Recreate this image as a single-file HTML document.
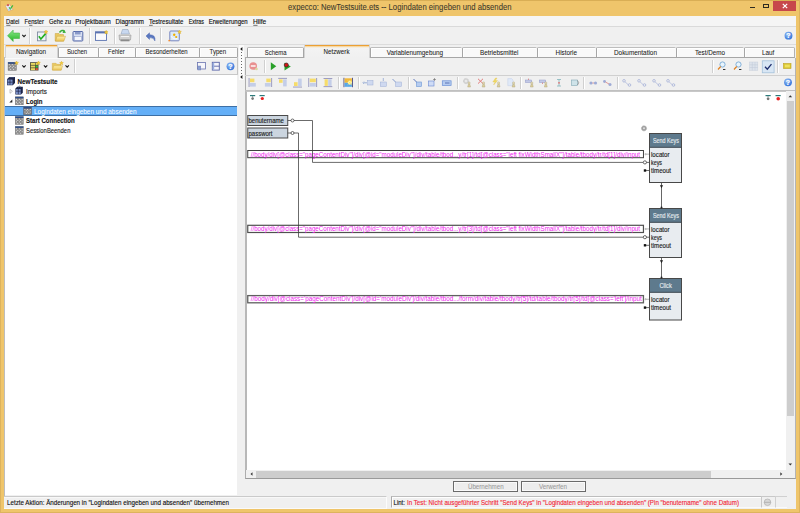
<!DOCTYPE html>
<html><head><meta charset="utf-8">
<style>
*{box-sizing:border-box;margin:0;padding:0}
html,body{width:800px;height:513px;overflow:hidden}
body{position:relative;background:#EFC56B;font-family:"Liberation Sans",sans-serif;font-size:6.3px;color:#1a1a1a}
.a{position:absolute}
.t{position:absolute;white-space:pre;line-height:1;-webkit-text-stroke:0.12px currentColor}
.tab{position:absolute;top:46.6px;height:11px;border:1px solid #A6A6A6;border-top-color:#BDBDBD;border-right:none;border-radius:1.5px 1.5px 0 0;background:#F9F9F9;box-shadow:inset 1px 1px 0 #FFF}
.sep{position:absolute;width:2px;background:#D0D0D0;border-right:1px solid #FFF}
.ic{position:absolute}
</style></head>
<body>
<!-- title bar -->
<div class="a" style="left:0;top:0;width:800px;height:1px;background:#D9AE55"></div><div class="a" style="left:0;top:0;width:1px;height:513px;background:#DDB35E"></div><div class="a" style="left:799px;top:0;width:1px;height:513px;background:#DDB35E"></div><div class="a" style="left:0;top:512px;width:800px;height:1px;background:#DDB35E"></div>
<svg class="a" style="left:0;top:0" width="16" height="16" viewBox="0 0 16 16"><path d="M5.3 5.8 L9.6 4.2 L13 9.6 L8.4 11.3Z" fill="#E4ECF6" stroke="#D49A60" stroke-width="0.5"/><circle cx="8" cy="5.2" r="1.1" fill="#D05A5A"/><path d="M9 7.4 L10.4 8.9 L12.8 5.4" fill="none" stroke="#3EB83E" stroke-width="1.3"/><path d="M7.5 9.5 L11 8.6 L8.8 11Z" fill="#A8D0F4"/></svg>
<div class="a" style="left:750px;top:6.5px;width:4.5px;height:1.5px;background:#2E2A20"></div>
<div class="a" style="left:763px;top:3.5px;width:6px;height:4.5px;border:1px solid #2E2A20;border-top-width:1.6px"></div>
<div class="a" style="left:773px;top:1px;width:23px;height:10px;background:#C7474B"></div>
<svg class="a" style="left:782px;top:3px" width="6" height="6" viewBox="0 0 6 6"><path d="M0.8 0.8 L5.2 5.2 M5.2 0.8 L0.8 5.2" stroke="#FFF" stroke-width="1.2"/></svg>

<!-- client area -->
<div class="a" style="left:4px;top:16px;width:791.5px;height:492.5px;background:#F0F0F0"></div>

<!-- menu bar -->
<div class="a" style="left:4px;top:16px;width:791.5px;height:10px;background:#F5F5F5"></div>
<div class="a" style="left:4px;top:26px;width:791.5px;height:1px;background:#DADADA"></div>

<!-- main toolbar -->
<div class="sep" style="left:29px;top:28px;height:16px"></div>
<div class="sep" style="left:88.5px;top:28px;height:16px"></div>
<div class="sep" style="left:113.5px;top:28px;height:16px"></div>
<div class="sep" style="left:139px;top:28px;height:16px"></div>
<div class="sep" style="left:160px;top:28px;height:16px"></div>
<div class="a" style="left:4px;top:44px;width:791.5px;height:1px;background:#DCDCDC"></div>

<!-- LEFT PANEL -->
<div class="a" style="left:4px;top:57px;width:234px;height:1px;background:#ADADAD"></div>
<div class="tab" style="left:58px;width:39.5px"></div>
<div class="tab" style="left:97.5px;width:37.5px"></div>
<div class="tab" style="left:135px;width:64px"></div>
<div class="tab" style="left:199px;width:38.5px;border-right:1px solid #A6A6A6"></div>
<div class="a" style="left:4.5px;top:45.2px;width:53.5px;height:12.8px;background:linear-gradient(#ECA034 0,#ECA034 1.3px,#F7D49A 1.3px,#F6E6C8 2.4px,#F3F3F3 2.6px,#F0F0F0);border:1px solid #D4D4D4;border-bottom:none;border-top:none"></div>

<!-- left toolbar -->
<div class="sep" style="left:73.5px;top:59px;height:14px"></div>
<div class="a" style="left:4.5px;top:73.5px;width:233px;height:1px;background:#C8C8C8"></div><div class="a" style="left:237px;top:57px;width:1px;height:17px;background:#C4C4C4"></div><div class="a" style="left:5px;top:58px;width:232px;height:1px;background:#FAFAFA"></div>
<!-- tree -->
<div class="a" style="left:5px;top:74.5px;width:232.3px;height:420px;background:#FFF"></div>
<div class="a" style="left:5px;top:105.8px;width:232px;height:10px;background:#64AFF7;border-top:1px solid #3D6FA5;border-bottom:1px solid #3D6FA5"></div>


<div class="a" style="left:4px;top:57px;width:1px;height:438.5px;background:#BDBDBD"></div>
<!-- splitter -->
<div class="a" style="left:238.5px;top:45px;width:5px;height:35px;background:#FBFBFB"></div>
<div class="a" style="left:240.8px;top:52.2px;width:1px;height:1px;background:#666"></div><div class="a" style="left:240.8px;top:55.2px;width:1px;height:1px;background:#666"></div><div class="a" style="left:240.8px;top:58.2px;width:1px;height:1px;background:#666"></div><div class="a" style="left:240.8px;top:61.2px;width:1px;height:1px;background:#666"></div><div class="a" style="left:240.8px;top:64.2px;width:1px;height:1px;background:#666"></div><div class="a" style="left:240.8px;top:67.2px;width:1px;height:1px;background:#666"></div><div class="a" style="left:240.8px;top:70.2px;width:1px;height:1px;background:#666"></div><div class="a" style="left:240.8px;top:73.2px;width:1px;height:1px;background:#666"></div>
<svg class="a" style="left:239.5px;top:47px" width="3" height="4"><path d="M2.4 0 L0.2 2 L2.4 4Z" fill="#111"/></svg>
<svg class="a" style="left:239.5px;top:74.6px" width="3" height="4"><path d="M2.4 0 L0.2 2 L2.4 4Z" fill="#111"/></svg>
<!-- RIGHT PANEL -->
<div class="a" style="left:245px;top:57px;width:550px;height:1px;background:#ADADAD"></div>
<div class="tab" style="left:246.5px;width:57.5px;border-right:1px solid #A6A6A6"></div>
<div class="tab" style="left:369.5px;width:92.5px"></div>
<div class="tab" style="left:462px;width:75px"></div>
<div class="tab" style="left:537px;width:58.5px"></div>
<div class="tab" style="left:595.5px;width:80.5px"></div>
<div class="tab" style="left:676px;width:68px"></div>
<div class="tab" style="left:744px;width:50.5px;border-right:1px solid #B0B0B0"></div>
<div class="a" style="left:304px;top:45.2px;width:65.5px;height:12.8px;background:linear-gradient(#ECA034 0,#ECA034 1.3px,#F7D49A 1.3px,#F6E6C8 2.4px,#F3F3F3 2.6px,#F0F0F0);border:1px solid #D4D4D4;border-bottom:none;border-top:none"></div>

<div class="a" style="left:244.5px;top:57.5px;width:551px;height:421.5px;border-left:1px solid #ADADAD;border-bottom:1px solid #9A9A9A;border-right:1px solid #B4B4B4"></div>
<!-- toolbar1/2 -->
<div class="sep" style="left:263.5px;top:60px;height:13px"></div>
<div class="sep" style="left:712px;top:60px;height:13px"></div>
<div class="sep" style="left:777px;top:60px;height:13px"></div>
<div class="a" style="left:245px;top:74.5px;width:550px;height:1px;background:#D0D0D0"></div>
<div class="sep" style="left:338px;top:77px;height:12px"></div>
<div class="sep" style="left:358px;top:77px;height:12px"></div><div class="sep" style="left:408px;top:77px;height:12px"></div><div class="sep" style="left:457px;top:77px;height:12px"></div><div class="sep" style="left:520px;top:77px;height:12px"></div><div class="sep" style="left:583px;top:77px;height:12px"></div><div class="sep" style="left:617px;top:77px;height:12px"></div>
<div class="a" style="left:245px;top:90px;width:550px;height:1px;background:#C0C0C0"></div>

<!-- canvas -->
<div class="a" style="left:245px;top:91px;width:541px;height:379px;background:#FFF;border-left:2px solid #B8B8B8;border-top:1px solid #C8C8C8"></div>
<!-- vscroll -->
<div class="a" style="left:786px;top:91px;width:8px;height:379px;background:#F0F0F0"></div>
<div class="a" style="left:787px;top:101px;width:7px;height:315px;background:#CDCDCD"></div>
<!-- hscroll -->
<div class="a" style="left:246px;top:470px;width:540px;height:8px;background:#F0F0F0"></div>
<div class="a" style="left:255.5px;top:470.5px;width:455px;height:7px;background:#CDCDCD"></div>

<svg class="a" style="left:0;top:0" width="800" height="513" viewBox="0 0 800 513" font-family="Liberation Sans, sans-serif">
<rect x="247.75" y="115.5" width="40" height="10" fill="#CBD5DF" stroke="#4A4A4A" stroke-width="1"/>
<text x="248.5" y="123" font-size="6.8" fill="#1E1E1E" stroke="#1E1E1E" stroke-width="0.15" textLength="35.4" lengthAdjust="spacingAndGlyphs">benutername</text>
<rect x="247.75" y="128" width="40" height="10" fill="#CBD5DF" stroke="#4A4A4A" stroke-width="1"/>
<text x="248.5" y="135.7" font-size="6.8" fill="#1E1E1E" stroke="#1E1E1E" stroke-width="0.15" textLength="24" lengthAdjust="spacingAndGlyphs">passwort</text>
<rect x="247.75" y="150.5" width="395.7" height="7.2" fill="#FFF" stroke="#404040" stroke-width="1"/>
<text x="250.7" y="156.6" font-size="6.2" transform="translate(0 156.6) scale(1 1.15) translate(0 -156.6)" fill="#EE22EE" textLength="389.3" lengthAdjust="spacingAndGlyphs">//body/div[@class=&quot;pageContentDiv&quot;]/div[@id=&quot;moduleDiv&quot;]/div/table/tbod...y/tr[1]/td[@class=&quot;left fixWidthSmallX&quot;]/table/tbody/tr/td[1]/div/input</text>
<path d="M644.5 154.15 H649.5" stroke="#B8B8B8" stroke-width="1"/><path d="M645 152.9 L647.3 154.15 L645 155.4Z" fill="#BBB"/>
<rect x="247.75" y="225.3" width="395.7" height="7.2" fill="#FFF" stroke="#505050" stroke-width="1.2"/>
<text x="250.7" y="231.4" font-size="6.2" transform="translate(0 231.4) scale(1 1.15) translate(0 -231.4)" fill="#EE22EE" textLength="389.3" lengthAdjust="spacingAndGlyphs">//body/div[@class=&quot;pageContentDiv&quot;]/div[@id=&quot;moduleDiv&quot;]/div/table/tbod...y/tr[3]/td[@class=&quot;left fixWidthSmallX&quot;]/table/tbody/tr/td[1]/div/input</text>
<path d="M644.5 228.95000000000002 H649.5" stroke="#B8B8B8" stroke-width="1"/><path d="M645 227.70000000000002 L647.3 228.95000000000002 L645 230.20000000000002Z" fill="#BBB"/>
<rect x="247.75" y="295.6" width="395.7" height="7.2" fill="#FFF" stroke="#606060" stroke-width="1.3"/>
<text x="250.7" y="301.5" font-size="6.2" transform="translate(0 301.5) scale(1 1.15) translate(0 -301.5)" fill="#EE22EE" textLength="391" lengthAdjust="spacingAndGlyphs">//body/div[@class=&#x27;pageContentDiv&#x27;]/div[@id=&#x27;moduleDiv&#x27;]/div/table/tbod.../form/div/table/tbody/tr[5]/td/table/tbody/tr[5]/td[@class=&#x27;left&#x27;]/input</text>
<path d="M644.5 299.25 H649.5" stroke="#B8B8B8" stroke-width="1"/><path d="M645 298.0 L647.3 299.25 L645 300.5Z" fill="#BBB"/>
<g fill="none" stroke="#3A3A3A" stroke-width="0.75">
<path d="M287.75 120.5 H291 M294 120.5 H312.5 V162.4 H643.2"/>
<circle cx="292.5" cy="120.5" r="1.5" fill="#fff"/>
<path d="M287.75 133 H291 M294 133 H298.5 V237.2 H643.2"/>
<circle cx="292.5" cy="133" r="1.5" fill="#fff"/>
<circle cx="644.9" cy="162.4" r="1.6" fill="#fff"/><path d="M646.5 162.4 H649.5"/>
<circle cx="644.9" cy="237.2" r="1.6" fill="#fff"/><path d="M646.5 237.2 H649.5"/>
<rect x="643.8" y="169.3" width="2.4" height="2.4" fill="#111" stroke="none"/><path d="M646 170.5 H649.5"/>
<rect x="643.8" y="244.10000000000002" width="2.4" height="2.4" fill="#111" stroke="none"/><path d="M646 245.3 H649.5"/>
<rect x="643.8" y="306.40000000000003" width="2.4" height="2.4" fill="#111" stroke="none"/><path d="M646 307.6 H649.5"/>
</g>
<rect x="649.5" y="133.5" width="32" height="49" fill="#E8ECF0" stroke="#484848" stroke-width="1"/><rect x="650" y="134" width="31" height="13.3" fill="#5E7A8D"/><line x1="649.5" y1="147.3" x2="681.5" y2="147.3" stroke="#3C4650" stroke-width="1"/><text x="652.9" y="142.9" font-size="6.5" fill="#E4EAEE" stroke="#E4EAEE" stroke-width="0.15" textLength="26.1" lengthAdjust="spacingAndGlyphs">Send Keys</text><text x="651" y="156.79999999999998" font-size="6.8" fill="#1E1E1E" stroke="#1E1E1E" stroke-width="0.15" textLength="18.5" lengthAdjust="spacingAndGlyphs">locator</text><text x="651" y="164.6" font-size="6.8" fill="#1E1E1E" stroke="#1E1E1E" stroke-width="0.15" textLength="11" lengthAdjust="spacingAndGlyphs">keys</text><text x="651" y="172.9" font-size="6.8" fill="#1E1E1E" stroke="#1E1E1E" stroke-width="0.15" textLength="20" lengthAdjust="spacingAndGlyphs">timeout</text>
<rect x="649.5" y="208.5" width="32" height="49" fill="#E8ECF0" stroke="#484848" stroke-width="1"/><rect x="650" y="209" width="31" height="13.3" fill="#5E7A8D"/><line x1="649.5" y1="222.3" x2="681.5" y2="222.3" stroke="#3C4650" stroke-width="1"/><text x="652.9" y="217.9" font-size="6.5" fill="#E4EAEE" stroke="#E4EAEE" stroke-width="0.15" textLength="26.1" lengthAdjust="spacingAndGlyphs">Send Keys</text><text x="651" y="231.79999999999998" font-size="6.8" fill="#1E1E1E" stroke="#1E1E1E" stroke-width="0.15" textLength="18.5" lengthAdjust="spacingAndGlyphs">locator</text><text x="651" y="239.6" font-size="6.8" fill="#1E1E1E" stroke="#1E1E1E" stroke-width="0.15" textLength="11" lengthAdjust="spacingAndGlyphs">keys</text><text x="651" y="247.9" font-size="6.8" fill="#1E1E1E" stroke="#1E1E1E" stroke-width="0.15" textLength="20" lengthAdjust="spacingAndGlyphs">timeout</text>
<rect x="649.5" y="278.5" width="32" height="41.5" fill="#E8ECF0" stroke="#484848" stroke-width="1"/><rect x="650" y="279" width="31" height="13.3" fill="#5E7A8D"/><line x1="649.5" y1="292.3" x2="681.5" y2="292.3" stroke="#3C4650" stroke-width="1"/><text x="659.5" y="287.9" font-size="6.5" fill="#E4EAEE" stroke="#E4EAEE" stroke-width="0.15" textLength="12.3" lengthAdjust="spacingAndGlyphs">Click</text><text x="651" y="301.90000000000003" font-size="6.8" fill="#1E1E1E" stroke="#1E1E1E" stroke-width="0.15" textLength="18.5" lengthAdjust="spacingAndGlyphs">locator</text><text x="651" y="310.1" font-size="6.8" fill="#1E1E1E" stroke="#1E1E1E" stroke-width="0.15" textLength="20" lengthAdjust="spacingAndGlyphs">timeout</text>
<path d="M661.5 183 V208 M661.5 258 V278" stroke="#333" stroke-width="0.75"/>
<path d="M659.9 185.3 L663.1 185.3 L661.5 188.3Z M659.9 260.3 L663.1 260.3 L661.5 263.3Z" fill="#222"/>
<circle cx="661.5" cy="207.5" r="1" fill="#222"/><circle cx="661.5" cy="277.5" r="1" fill="#222"/>
<circle cx="644" cy="128.3" r="2.6" fill="#A0A0A0" stroke="#B8B8B8" stroke-width="0.8" stroke-dasharray="0.8 0.6"/><circle cx="644" cy="128.3" r="1" fill="#E0E0E0"/>
</svg>
<svg class="a" style="left:0;top:0" width="800" height="513" viewBox="0 0 800 513">
<defs><linearGradient id="g1" x1="0" y1="0" x2="0" y2="1"><stop offset="0" stop-color="#8BE88B"/><stop offset="1" stop-color="#26B526"/></linearGradient><linearGradient id="fold" x1="0" y1="0" x2="0" y2="1"><stop offset="0" stop-color="#FFF0A8"/><stop offset="1" stop-color="#E8C050"/></linearGradient><radialGradient id="help" cx="0.4" cy="0.35" r="0.7"><stop offset="0" stop-color="#9CC4F8"/><stop offset="1" stop-color="#2E6FD8"/></radialGradient></defs>
<path d="M7.5 35.75 L13.2 30 V33 H19.5 V38.5 H13.2 V41.5Z" fill="url(#g1)" stroke="#3BAA3B" stroke-width="0.5"/>
<path d="M22.3 34.800000000000004 L24 36.6 L25.7 34.800000000000004" fill="none" stroke="#1a1a1a" stroke-width="1.1"/>
<rect x="37.5" y="32" width="8.5" height="8.8" fill="#EEF2F6" stroke="#7E8CA0" stroke-width="0.9"/>
<path d="M38.8 36.2 L40.9 39 L45.6 33.6" fill="none" stroke="#22B022" stroke-width="1.6"/>
<polygon points="46.00,30.00 46.53,31.27 47.90,31.38 46.86,32.28 47.18,33.62 46.00,32.90 44.82,33.62 45.14,32.28 44.10,31.38 45.47,31.27" fill="#F5D23A" stroke="#D9A520" stroke-width="0.4"/>
<path d="M55.2 33.5 H59 L60 34.5 H63.5 V41 H55.2Z" fill="#E8C860" stroke="#C8A040" stroke-width="0.5"/>
<path d="M55.5 41.2 L57 36.3 H65.5 L63.8 41.2Z" fill="url(#fold)" stroke="#C8A040" stroke-width="0.5"/>
<path d="M59.5 32.5 Q62 29.2 64.5 31.3" fill="none" stroke="#3AAE3A" stroke-width="1.5"/><path d="M63.8 29.6 L66 32.8 L62.6 33Z" fill="#3AAE3A"/>
<rect x="73" y="31.5" width="9.8" height="9.5" rx="0.8" fill="#D8E0F2" stroke="#5468A8" stroke-width="1"/>
<rect x="74.3" y="36.5" width="7.2" height="3.8" fill="#F4F6FC" stroke="#6A7CB8" stroke-width="0.4"/><rect x="75" y="31.8" width="5.6" height="2.6" fill="#8A9ACA"/>
<rect x="95.5" y="31.8" width="11" height="8.6" fill="#FAFAFC" stroke="#5A72B0" stroke-width="0.9"/><rect x="95.5" y="31.8" width="11" height="1.6" fill="#5A72B0"/>
<polygon points="106.20,30.30 106.73,31.57 108.10,31.68 107.06,32.58 107.38,33.92 106.20,33.20 105.02,33.92 105.34,32.58 104.30,31.68 105.67,31.57" fill="#F5D23A" stroke="#D9A520" stroke-width="0.4"/>
<path d="M121 34 L122.5 29.5 H128 L129.5 34Z" fill="#C8D8F0" stroke="#8898B0" stroke-width="0.5"/>
<path d="M119 35 H131 L130.5 40 H119.5Z" fill="#D0D0D0" stroke="#9A9A9A" stroke-width="0.6"/><rect x="120.5" y="39.5" width="9" height="1.8" fill="#8A8A8A"/><rect x="121" y="36" width="8" height="1" fill="#F4F4F4"/>
<path d="M146 36 L149.5 32.8 V34.8 Q155.8 34.5 155 41 Q153.6 37.4 149.5 37.6 V39.4Z" fill="#5A78C0" stroke="#3E5CA8" stroke-width="0.4"/>
<rect x="169.8" y="31" width="9.5" height="9.8" rx="1" fill="#DCEAF8" stroke="#7A88C0" stroke-width="1"/>
<circle cx="174.2" cy="34.8" r="1.2" fill="#F0B000"/><circle cx="176.2" cy="37" r="1.1" fill="#F0B000"/><path d="M171 36 Q173 40 177.5 38.5" fill="none" stroke="#FFFFFF" stroke-width="0.8"/>
<polygon points="179.50,30.00 180.03,31.27 181.40,31.38 180.36,32.28 180.68,33.62 179.50,32.90 178.32,33.62 178.64,32.28 177.60,31.38 178.97,31.27" fill="#F5D23A" stroke="#D9A520" stroke-width="0.4"/>
<circle cx="169.2" cy="40.6" r="0.9" fill="#F08A30"/>
<rect x="8" y="62.2" width="8.5" height="8.3" fill="#707070" stroke="#8A8A8A" stroke-width="0.4"/><rect x="8" y="62.2" width="8.5" height="1.5" fill="#2E4E8A"/><rect x="8.65" y="64.15" width="1.20" height="1.23" fill="#E6E6E6"/><rect x="8.65" y="65.68" width="1.20" height="1.23" fill="#9A9A9A"/><rect x="8.65" y="67.20" width="1.20" height="1.23" fill="#E6E6E6"/><rect x="8.65" y="68.73" width="1.20" height="1.23" fill="#9A9A9A"/><rect x="10.15" y="64.15" width="1.20" height="1.23" fill="#9A9A9A"/><rect x="10.15" y="65.68" width="1.20" height="1.23" fill="#E6E6E6"/><rect x="10.15" y="67.20" width="1.20" height="1.23" fill="#9A9A9A"/><rect x="10.15" y="68.73" width="1.20" height="1.23" fill="#E6E6E6"/><rect x="11.65" y="64.15" width="1.20" height="1.23" fill="#E6E6E6"/><rect x="11.65" y="65.68" width="1.20" height="1.23" fill="#9A9A9A"/><rect x="11.65" y="67.20" width="1.20" height="1.23" fill="#E6E6E6"/><rect x="11.65" y="68.73" width="1.20" height="1.23" fill="#9A9A9A"/><rect x="13.15" y="64.15" width="1.20" height="1.23" fill="#9A9A9A"/><rect x="13.15" y="65.68" width="1.20" height="1.23" fill="#E6E6E6"/><rect x="13.15" y="67.20" width="1.20" height="1.23" fill="#9A9A9A"/><rect x="13.15" y="68.73" width="1.20" height="1.23" fill="#E6E6E6"/><rect x="14.65" y="64.15" width="1.20" height="1.23" fill="#E6E6E6"/><rect x="14.65" y="65.68" width="1.20" height="1.23" fill="#9A9A9A"/><rect x="14.65" y="67.20" width="1.20" height="1.23" fill="#E6E6E6"/><rect x="14.65" y="68.73" width="1.20" height="1.23" fill="#9A9A9A"/>
<polygon points="16.60,61.00 17.13,62.27 18.50,62.38 17.46,63.28 17.78,64.62 16.60,63.90 15.42,64.62 15.74,63.28 14.70,62.38 16.07,62.27" fill="#F5D23A" stroke="#D9A520" stroke-width="0.4"/>
<path d="M22.3 65.4 L24 67.2 L25.7 65.4" fill="none" stroke="#1a1a1a" stroke-width="1.1"/>
<rect x="30" y="62.2" width="8.5" height="8.3" fill="#4A4A3A"/>
<rect x="30.8" y="63.0" width="4.2" height="1.9" fill="#E8D860"/>
<rect x="30.8" y="65.6" width="4.2" height="1.9" fill="#E8D860"/>
<rect x="30.8" y="68.2" width="4.2" height="1.9" fill="#E8D860"/>
<rect x="35.6" y="63" width="2.2" height="1.9" fill="#E8D860"/><rect x="35.6" y="65.6" width="2.2" height="1.9" fill="#3CC03C"/><rect x="35.6" y="68.2" width="2.2" height="1.9" fill="#E85030"/>
<polygon points="38.50,61.00 39.03,62.27 40.40,62.38 39.36,63.28 39.68,64.62 38.50,63.90 37.32,64.62 37.64,63.28 36.60,62.38 37.97,62.27" fill="#F5D23A" stroke="#D9A520" stroke-width="0.4"/>
<path d="M43.9 65.4 L45.6 67.2 L47.300000000000004 65.4" fill="none" stroke="#1a1a1a" stroke-width="1.1"/>
<path d="M52.3 63.3 H56 L57 64.3 H61 V70 H52.3Z" fill="#E8C860" stroke="#D0A848" stroke-width="0.5"/><path d="M52.5 70.2 L53.6 65.8 H62.6 L61.3 70.2Z" fill="url(#fold)" stroke="#D0A848" stroke-width="0.4"/>
<polygon points="61.50,61.20 62.03,62.47 63.40,62.58 62.36,63.48 62.68,64.82 61.50,64.10 60.32,64.82 60.64,63.48 59.60,62.58 60.97,62.47" fill="#F5D23A" stroke="#D9A520" stroke-width="0.4"/>
<path d="M65.5 65.4 L67.2 67.2 L68.9 65.4" fill="none" stroke="#1a1a1a" stroke-width="1.1"/>
<rect x="197.5" y="62.5" width="8" height="6.5" fill="#F6F6FA" stroke="#6A74B0" stroke-width="0.8"/><rect x="197.8" y="66" width="3" height="4" fill="#8AA0D0" stroke="#6A74B0" stroke-width="0.4"/>
<rect x="212.3" y="62.3" width="7" height="7.8" fill="#F4F4FA" stroke="#5A64A8" stroke-width="0.9"/><path d="M212.3 66.2 H219.3" stroke="#5A64A8" stroke-width="0.9"/><rect x="212.7" y="62.7" width="1.5" height="7" fill="#9AB0E0"/>
<circle cx="230.5" cy="66.3" r="3.9" fill="url(#help)"/><text x="230.5" y="68.9" text-anchor="middle" font-family="Liberation Sans" font-weight="bold" font-size="7" fill="#FFF" stroke="#FFF" stroke-width="0.2">?</text>
<path d="M7 79.2 L9.2 77 H15 V83 L12.8 85.2 H7Z" fill="#1C2448"/><rect x="7.5" y="79.6" width="5" height="5.2" fill="#7A90C8"/><path d="M7.5 82.2 H12.5 M10 79.6 V84.8" stroke="#1C2448" stroke-width="0.7"/><path d="M9.2 77.6 H14.4" stroke="#5A6A98" stroke-width="0.5"/>
<path d="M10 89.3 L12.4 91.3 L10 93.3Z" fill="none" stroke="#A0A0A0" stroke-width="0.6"/>
<path d="M15.4 88.6 L17.2 86.8 H22.8 V92.8 L21 94.6 H15.4Z" fill="#1C2448"/><rect x="15.9" y="89.1" width="4.8" height="5.1" fill="#7A90C8"/><path d="M18.3 89.1 V94.2 M15.9 91.2 H20.7" stroke="#1C2448" stroke-width="0.7"/><path d="M18 87.5 Q19.5 84.8 21 87.5" fill="none" stroke="#4A5A88" stroke-width="0.8"/>
<path d="M12.3 99.6 V102.6 H9.3Z" fill="#222"/>
<rect x="15.2" y="96.8" width="8.2" height="8" fill="#707070" stroke="#8A8A8A" stroke-width="0.4"/><rect x="15.2" y="96.8" width="8.2" height="1.5" fill="#2E4E8A"/><rect x="15.85" y="98.75" width="1.14" height="1.15" fill="#E6E6E6"/><rect x="15.85" y="100.20" width="1.14" height="1.15" fill="#9A9A9A"/><rect x="15.85" y="101.65" width="1.14" height="1.15" fill="#E6E6E6"/><rect x="15.85" y="103.10" width="1.14" height="1.15" fill="#9A9A9A"/><rect x="17.29" y="98.75" width="1.14" height="1.15" fill="#9A9A9A"/><rect x="17.29" y="100.20" width="1.14" height="1.15" fill="#E6E6E6"/><rect x="17.29" y="101.65" width="1.14" height="1.15" fill="#9A9A9A"/><rect x="17.29" y="103.10" width="1.14" height="1.15" fill="#E6E6E6"/><rect x="18.73" y="98.75" width="1.14" height="1.15" fill="#E6E6E6"/><rect x="18.73" y="100.20" width="1.14" height="1.15" fill="#9A9A9A"/><rect x="18.73" y="101.65" width="1.14" height="1.15" fill="#E6E6E6"/><rect x="18.73" y="103.10" width="1.14" height="1.15" fill="#9A9A9A"/><rect x="20.17" y="98.75" width="1.14" height="1.15" fill="#9A9A9A"/><rect x="20.17" y="100.20" width="1.14" height="1.15" fill="#E6E6E6"/><rect x="20.17" y="101.65" width="1.14" height="1.15" fill="#9A9A9A"/><rect x="20.17" y="103.10" width="1.14" height="1.15" fill="#E6E6E6"/><rect x="21.61" y="98.75" width="1.14" height="1.15" fill="#E6E6E6"/><rect x="21.61" y="100.20" width="1.14" height="1.15" fill="#9A9A9A"/><rect x="21.61" y="101.65" width="1.14" height="1.15" fill="#E6E6E6"/><rect x="21.61" y="103.10" width="1.14" height="1.15" fill="#9A9A9A"/>
<rect x="15.2" y="116.5" width="8.2" height="8" fill="#707070" stroke="#8A8A8A" stroke-width="0.4"/><rect x="15.2" y="116.5" width="8.2" height="1.5" fill="#2E4E8A"/><rect x="15.85" y="118.45" width="1.14" height="1.15" fill="#E6E6E6"/><rect x="15.85" y="119.90" width="1.14" height="1.15" fill="#9A9A9A"/><rect x="15.85" y="121.35" width="1.14" height="1.15" fill="#E6E6E6"/><rect x="15.85" y="122.80" width="1.14" height="1.15" fill="#9A9A9A"/><rect x="17.29" y="118.45" width="1.14" height="1.15" fill="#9A9A9A"/><rect x="17.29" y="119.90" width="1.14" height="1.15" fill="#E6E6E6"/><rect x="17.29" y="121.35" width="1.14" height="1.15" fill="#9A9A9A"/><rect x="17.29" y="122.80" width="1.14" height="1.15" fill="#E6E6E6"/><rect x="18.73" y="118.45" width="1.14" height="1.15" fill="#E6E6E6"/><rect x="18.73" y="119.90" width="1.14" height="1.15" fill="#9A9A9A"/><rect x="18.73" y="121.35" width="1.14" height="1.15" fill="#E6E6E6"/><rect x="18.73" y="122.80" width="1.14" height="1.15" fill="#9A9A9A"/><rect x="20.17" y="118.45" width="1.14" height="1.15" fill="#9A9A9A"/><rect x="20.17" y="119.90" width="1.14" height="1.15" fill="#E6E6E6"/><rect x="20.17" y="121.35" width="1.14" height="1.15" fill="#9A9A9A"/><rect x="20.17" y="122.80" width="1.14" height="1.15" fill="#E6E6E6"/><rect x="21.61" y="118.45" width="1.14" height="1.15" fill="#E6E6E6"/><rect x="21.61" y="119.90" width="1.14" height="1.15" fill="#9A9A9A"/><rect x="21.61" y="121.35" width="1.14" height="1.15" fill="#E6E6E6"/><rect x="21.61" y="122.80" width="1.14" height="1.15" fill="#9A9A9A"/>
<rect x="15.2" y="126.4" width="8.2" height="8" fill="#707070" stroke="#8A8A8A" stroke-width="0.4"/><rect x="15.2" y="126.4" width="8.2" height="1.5" fill="#2E4E8A"/><rect x="15.85" y="128.35" width="1.14" height="1.15" fill="#E6E6E6"/><rect x="15.85" y="129.80" width="1.14" height="1.15" fill="#9A9A9A"/><rect x="15.85" y="131.25" width="1.14" height="1.15" fill="#E6E6E6"/><rect x="15.85" y="132.70" width="1.14" height="1.15" fill="#9A9A9A"/><rect x="17.29" y="128.35" width="1.14" height="1.15" fill="#9A9A9A"/><rect x="17.29" y="129.80" width="1.14" height="1.15" fill="#E6E6E6"/><rect x="17.29" y="131.25" width="1.14" height="1.15" fill="#9A9A9A"/><rect x="17.29" y="132.70" width="1.14" height="1.15" fill="#E6E6E6"/><rect x="18.73" y="128.35" width="1.14" height="1.15" fill="#E6E6E6"/><rect x="18.73" y="129.80" width="1.14" height="1.15" fill="#9A9A9A"/><rect x="18.73" y="131.25" width="1.14" height="1.15" fill="#E6E6E6"/><rect x="18.73" y="132.70" width="1.14" height="1.15" fill="#9A9A9A"/><rect x="20.17" y="128.35" width="1.14" height="1.15" fill="#9A9A9A"/><rect x="20.17" y="129.80" width="1.14" height="1.15" fill="#E6E6E6"/><rect x="20.17" y="131.25" width="1.14" height="1.15" fill="#9A9A9A"/><rect x="20.17" y="132.70" width="1.14" height="1.15" fill="#E6E6E6"/><rect x="21.61" y="128.35" width="1.14" height="1.15" fill="#E6E6E6"/><rect x="21.61" y="129.80" width="1.14" height="1.15" fill="#9A9A9A"/><rect x="21.61" y="131.25" width="1.14" height="1.15" fill="#E6E6E6"/><rect x="21.61" y="132.70" width="1.14" height="1.15" fill="#9A9A9A"/>
<rect x="23.3" y="106.6" width="8.4" height="8.2" fill="#39547C"/>
<rect x="23.8" y="107" width="7.6" height="7.5" fill="#707070" stroke="#8A8A8A" stroke-width="0.4"/><rect x="23.8" y="107" width="7.6" height="1.5" fill="#2E4E8A"/><rect x="24.45" y="108.95" width="1.02" height="1.02" fill="#E6E6E6"/><rect x="24.45" y="110.28" width="1.02" height="1.02" fill="#9A9A9A"/><rect x="24.45" y="111.60" width="1.02" height="1.02" fill="#E6E6E6"/><rect x="24.45" y="112.92" width="1.02" height="1.02" fill="#9A9A9A"/><rect x="25.77" y="108.95" width="1.02" height="1.02" fill="#9A9A9A"/><rect x="25.77" y="110.28" width="1.02" height="1.02" fill="#E6E6E6"/><rect x="25.77" y="111.60" width="1.02" height="1.02" fill="#9A9A9A"/><rect x="25.77" y="112.92" width="1.02" height="1.02" fill="#E6E6E6"/><rect x="27.09" y="108.95" width="1.02" height="1.02" fill="#E6E6E6"/><rect x="27.09" y="110.28" width="1.02" height="1.02" fill="#9A9A9A"/><rect x="27.09" y="111.60" width="1.02" height="1.02" fill="#E6E6E6"/><rect x="27.09" y="112.92" width="1.02" height="1.02" fill="#9A9A9A"/><rect x="28.41" y="108.95" width="1.02" height="1.02" fill="#9A9A9A"/><rect x="28.41" y="110.28" width="1.02" height="1.02" fill="#E6E6E6"/><rect x="28.41" y="111.60" width="1.02" height="1.02" fill="#9A9A9A"/><rect x="28.41" y="112.92" width="1.02" height="1.02" fill="#E6E6E6"/><rect x="29.73" y="108.95" width="1.02" height="1.02" fill="#E6E6E6"/><rect x="29.73" y="110.28" width="1.02" height="1.02" fill="#9A9A9A"/><rect x="29.73" y="111.60" width="1.02" height="1.02" fill="#E6E6E6"/><rect x="29.73" y="112.92" width="1.02" height="1.02" fill="#9A9A9A"/>
<circle cx="253.2" cy="66" r="3.8" fill="#E89090"/><rect x="250.8" y="65.3" width="4.8" height="1.4" fill="#FFF"/><circle cx="256.5" cy="69" r="1.3" fill="#D8D8A0"/>
<path d="M270.8 62.2 L276.3 66.2 L270.8 70.2Z" fill="#2AA02A"/>
<path d="M284.5 62.8 L290.8 66.5 L284.5 70.5Z" fill="#2AA02A"/><ellipse cx="286.3" cy="65" rx="2.1" ry="2" fill="#D01818" stroke="#222" stroke-width="0.6"/>
<circle cx="722.5" cy="64.5" r="2.6" fill="#E8F4FC" stroke="#6AA0D0" stroke-width="0.8"/><path d="M720.7 66.5 L718.0 69.5" stroke="#E08020" stroke-width="1.2"/><rect x="723.0" y="69" width="2.4" height="1" fill="#333"/>
<circle cx="738.5" cy="64.5" r="2.6" fill="#E8F4FC" stroke="#6AA0D0" stroke-width="0.8"/><path d="M736.7 66.5 L734.0 69.5" stroke="#E08020" stroke-width="1.2"/><rect x="739.0" y="69" width="2.4" height="1" fill="#333"/>
<rect x="749.5" y="62" width="8.3" height="8.3" fill="#DDE3EC" stroke="#C8D0DC" stroke-width="0.5"/><path d="M752.3 62 V70.3 M755 62 V70.3 M749.5 64.8 H757.8 M749.5 67.5 H757.8" stroke="#C0C8D8" stroke-width="0.5"/>
<rect x="762.3" y="60.8" width="11.8" height="12" fill="#D8E6F4" stroke="#A4C0DA" stroke-width="0.8"/><path d="M765 66.8 L767.3 69.2 L771.5 64.2" fill="none" stroke="#1C2C6C" stroke-width="1.3"/>
<rect x="783.5" y="63.5" width="7.5" height="5" fill="#D8C830" stroke="#C0A020" stroke-width="0.6"/><rect x="784.8" y="64.7" width="5" height="2.6" fill="#EFE060"/>
<g>
<rect x="248.6" y="78" width="0.9" height="9" fill="#9494BC"/><rect x="250" y="78.6" width="4.4" height="3.6" fill="#F6DC6A"/><rect x="250" y="83" width="5.8" height="3.6" fill="#C4CEE8"/>
<rect x="271.2" y="78" width="0.9" height="9" fill="#9494BC"/><rect x="266.3" y="78.6" width="4.4" height="3.6" fill="#F6DC6A"/><rect x="264.9" y="83" width="5.8" height="3.6" fill="#C4CEE8"/>
<rect x="278.2" y="77.9" width="8.8" height="0.9" fill="#9494BC"/><rect x="279" y="79.4" width="3.6" height="3.4" fill="#F6DC6A"/><rect x="283.1" y="79.4" width="3.6" height="7" fill="#C4CEE8"/>
<rect x="293" y="86.6" width="9" height="0.9" fill="#9494BC"/><rect x="294" y="82.2" width="3.6" height="3.8" fill="#F6DC6A"/><rect x="298.1" y="78.6" width="3.6" height="7.4" fill="#C4CEE8"/>
<rect x="308.3" y="78" width="0.9" height="9" fill="#9494BC"/><rect x="316.2" y="78" width="0.9" height="9" fill="#9494BC"/><rect x="309.8" y="78.6" width="6" height="3.6" fill="#F6DC6A"/><rect x="309.8" y="83" width="6" height="3.6" fill="#C4CEE8"/>
<rect x="323.5" y="78" width="8.8" height="0.9" fill="#9494BC"/><rect x="323.5" y="86.2" width="8.8" height="0.9" fill="#9494BC"/><rect x="324.6" y="79.3" width="3.2" height="6.6" fill="#F6DC6A"/><rect x="328.2" y="79.3" width="3.4" height="6.6" fill="#C4CEE8"/>
</g>
<rect x="343.5" y="77.8" width="0.9" height="9.4" fill="#4A4A80"/><rect x="352" y="77.8" width="0.9" height="9.4" fill="#4A4A80"/><rect x="344.6" y="78.3" width="7.3" height="4.5" fill="#F2B838"/><rect x="344.6" y="82.8" width="7.3" height="4" fill="#58A8E8"/><circle cx="349.8" cy="82.6" r="2.1" fill="#FFF6B0"/><path d="M347.5 80.5 L352 84.8 M352 80.5 L347.5 84.8" stroke="#F8E060" stroke-width="0.7"/>
<g opacity="0.8">
<path d="M363.5 82.8 H367" stroke="#6A8AC8" stroke-width="0.8"/><path d="M364 81.5 L362.8 82.8 L364 84" fill="none" stroke="#6A8AC8" stroke-width="0.6"/><rect x="367.5" y="80.5" width="5.5" height="4.5" fill="#C8D4F0" stroke="#8AA0D0" stroke-width="0.5"/>
<rect x="380.3" y="82" width="6" height="4.5" fill="#C8D4F0" stroke="#8AA0D0" stroke-width="0.5"/><path d="M383.3 78 V81" stroke="#6A8AC8" stroke-width="0.7"/>
<path d="M392.5 79 L396 82.5" stroke="#5A7AC0" stroke-width="0.9"/><rect x="395.5" y="82" width="6" height="4.5" fill="#C8D4F0" stroke="#8AA0D0" stroke-width="0.5"/>
<path d="M413.5 79 L417 82.5" stroke="#3A5AB0" stroke-width="1"/><rect x="416.5" y="82" width="5" height="4.5" fill="#A8C4F0" stroke="#4A80D0" stroke-width="0.6"/>
<rect x="428.5" y="81" width="5.5" height="5" fill="#C8D8F8" stroke="#4A70C8" stroke-width="0.6"/><path d="M434.5 78 V81 M433 79.5 H436" stroke="#333" stroke-width="0.5"/>
<rect x="442.3" y="80.8" width="8.8" height="4.6" fill="#A8C4F0" stroke="#4A7AD0" stroke-width="0.7"/><path d="M445 83 H449.5" stroke="#2A4AA0" stroke-width="0.9"/>
</g><g opacity="0.8">
<circle cx="466" cy="81" r="2.6" fill="#D0D0D0" stroke="#B0B0B0" stroke-width="0.6" stroke-dasharray="0.9 0.5"/><circle cx="466" cy="81" r="0.9" fill="#F4F4F4"/>
<circle cx="469.1" cy="83.0" r="1.1" fill="#E8DCA8" stroke="#9A8A58" stroke-width="0.4"/><path d="M467.7 87.0 L468.3 84.30000000000001 H469.9 L470.5 87.0Z" fill="#D8C888" stroke="#9A8A58" stroke-width="0.4"/>
<path d="M478 78.8 L483 83.6 M483 78.8 L478 83.6" stroke="#E06060" stroke-width="1"/>
<circle cx="483.6" cy="83.0" r="1.1" fill="#E8DCA8" stroke="#9A8A58" stroke-width="0.4"/><path d="M482.2 87.0 L482.8 84.30000000000001 H484.4 L485 87.0Z" fill="#D8C888" stroke="#9A8A58" stroke-width="0.4"/>
<path d="M495.5 78 L492.8 82 H495 L493.6 85 L497.6 80.6 H495.4 L497 78Z" fill="#F2D640" stroke="#D8B020" stroke-width="0.3"/>
<circle cx="498.6" cy="83.0" r="1.1" fill="#E8DCA8" stroke="#9A8A58" stroke-width="0.4"/><path d="M497.2 87.0 L497.8 84.30000000000001 H499.4 L500 87.0Z" fill="#D8C888" stroke="#9A8A58" stroke-width="0.4"/>
<path d="M507.8 78.6 H511.6 L513 80 V85.6 H507.8Z" fill="#DDE8FA" stroke="#B8C8E8" stroke-width="0.5"/>
<circle cx="513.6" cy="83.0" r="1.1" fill="#E8DCA8" stroke="#9A8A58" stroke-width="0.4"/><path d="M512.2 87.0 L512.8 84.30000000000001 H514.4 L515 87.0Z" fill="#D8C888" stroke="#9A8A58" stroke-width="0.4"/>
<rect x="525.3" y="80" width="6.4" height="2.6" fill="#B8C0E4" stroke="#8088C0" stroke-width="0.5"/><path d="M528.5 78.6 V80" stroke="#D05050" stroke-width="0.7"/>
<circle cx="531.8000000000001" cy="83.0" r="1.1" fill="#E8DCA8" stroke="#9A8A58" stroke-width="0.4"/><path d="M530.4000000000001 87.0 L531.0 84.30000000000001 H532.6 L533.2 87.0Z" fill="#D8C888" stroke="#9A8A58" stroke-width="0.4"/>
<rect x="539.3" y="80" width="6.4" height="2.6" fill="#B8C0E4" stroke="#8088C0" stroke-width="0.5"/><path d="M542.5 82.6 V84" stroke="#D05050" stroke-width="0.7"/>
<circle cx="545.8000000000001" cy="83.0" r="1.1" fill="#E8DCA8" stroke="#9A8A58" stroke-width="0.4"/><path d="M544.4000000000001 87.0 L545.0 84.30000000000001 H546.6 L547.2 87.0Z" fill="#D8C888" stroke="#9A8A58" stroke-width="0.4"/>
<path d="M557 79.5 H561 M557 86 H561 M559 79.5 V86" stroke="#6AA8B0" stroke-width="0.8"/><circle cx="559" cy="82.8" r="0.9" fill="#E05050"/>
<rect x="571.5" y="80" width="6" height="5.5" fill="#C8E0E8" stroke="#6A98A8" stroke-width="0.6"/><path d="M577.5 80.5 Q580 82.8 577.5 85" fill="none" stroke="#555" stroke-width="0.6"/>
<circle cx="591" cy="83" r="1.6" fill="#8A9AD0"/><circle cx="595.5" cy="83" r="1.6" fill="#8A9AD0"/><path d="M592.5 83 H594" stroke="#D04040" stroke-width="0.6"/>
<circle cx="604.5" cy="81.5" r="1.4" fill="#8A9AD0"/><circle cx="610" cy="84.5" r="1.5" fill="#8A9AD0"/><path d="M605.5 82 L609 84" stroke="#D04040" stroke-width="0.6"/>
<circle cx="624.0" cy="80.8" r="1.3" fill="none" stroke="#8A9AD0" stroke-width="0.7"/><path d="M625.0 81.8 L628.0 84.5" stroke="#8A9AD0" stroke-width="0.6"/><circle cx="629.5" cy="85" r="1.3" fill="none" stroke="#8A9AD0" stroke-width="0.7"/>
<circle cx="639.0" cy="80.8" r="1.3" fill="none" stroke="#8A9AD0" stroke-width="0.7"/><path d="M640.0 81.8 L643.0 84.5" stroke="#8A9AD0" stroke-width="0.6"/><circle cx="644.5" cy="85" r="1.3" fill="none" stroke="#8A9AD0" stroke-width="0.7"/>
<circle cx="654.0" cy="80.8" r="1.3" fill="none" stroke="#8A9AD0" stroke-width="0.7"/><path d="M655.0 81.8 L658.0 84.5" stroke="#8A9AD0" stroke-width="0.6"/><circle cx="659.5" cy="85" r="1.3" fill="none" stroke="#8A9AD0" stroke-width="0.7"/>
<circle cx="668.0" cy="80.8" r="1.3" fill="none" stroke="#8A9AD0" stroke-width="0.7"/><path d="M669.0 81.8 L672.0 84.5" stroke="#8A9AD0" stroke-width="0.6"/><circle cx="673.5" cy="85" r="1.3" fill="none" stroke="#8A9AD0" stroke-width="0.7"/>
</g>
<circle cx="788" cy="82.3" r="3.9" fill="url(#help)"/><text x="788" y="84.9" text-anchor="middle" font-family="Liberation Sans" font-weight="bold" font-size="7" fill="#FFF" stroke="#FFF" stroke-width="0.2">?</text>
<circle cx="788.5" cy="35.7" r="3.9" fill="url(#help)"/><text x="788.5" y="38.3" text-anchor="middle" font-family="Liberation Sans" font-weight="bold" font-size="7" fill="#FFF" stroke="#FFF" stroke-width="0.2">?</text>
<rect x="250" y="95" width="5.2" height="1.2" fill="#2A7A7A"/><path d="M252.6 96.2 V97.5" stroke="#333" stroke-width="0.5"/><circle cx="252.6" cy="98.6" r="1.3" fill="#777"/>
<rect x="259.5" y="95" width="5.2" height="1.2" fill="#2A7A7A"/><circle cx="262.3" cy="98.5" r="1.6" fill="#E82020"/>
<rect x="765.5" y="95" width="5.2" height="1.2" fill="#2A7A7A"/><path d="M768 96.2 V97.5" stroke="#333" stroke-width="0.5"/><circle cx="768.1" cy="98.8" r="1.4" fill="#777"/>
<rect x="775.5" y="95" width="5.2" height="1.2" fill="#2A7A7A"/><circle cx="778.2" cy="98.8" r="1.8" fill="#E82020"/>
<path d="M788.5 97.3 L790.3 95.3 L792.1 97.3Z" fill="#333"/>
<path d="M788.5 463.5 L790.3 465.5 L792.1 463.5Z" fill="#333"/>
<path d="M252.5 472.3 L250.5 474 L252.5 475.7Z" fill="#333"/>
<path d="M780.3 472.3 L782.3 474 L780.3 475.7Z" fill="#333"/>
<circle cx="767.5" cy="502.3" r="3.3" fill="#D8D8D8" stroke="#A8A8A8" stroke-width="0.6"/><path d="M764.3 502.3 H770.7" stroke="#999" stroke-width="0.6"/>
</svg>
<!-- buttons -->
<div class="a" style="left:453px;top:481px;width:65px;height:11px;border:1px solid #6A6A6A;background:#EDEDED;box-shadow:inset 0 0 0 1px #FAFAFA"></div>
<div class="a" style="left:520.5px;top:481px;width:65px;height:11px;border:1px solid #6A6A6A;background:#EDEDED;box-shadow:inset 0 0 0 1px #FAFAFA"></div>

<!-- status bar -->
<div class="a" style="left:4px;top:495.5px;width:382.5px;height:13px;border-top:1px solid #CACACA;border-right:1px solid #FCFCFC;border-bottom:1px solid #FAFAFA;box-shadow:inset 0 1px 0 #F8F8F8"></div>
<div class="a" style="left:391px;top:495.8px;width:370px;height:12.7px;border-left:1px solid #ABABAB;border-top:1px solid #BDBDBD;border-bottom:1px solid #FAFAFA;box-shadow:inset 1px 1px 0 #FFF"></div>
<div class="a" style="left:761px;top:495.8px;width:14px;height:12.7px;border-left:1px solid #C8C8C8;border-top:1px solid #C8C8C8;border-bottom:1px solid #FAFAFA"></div>
<div class="a" style="left:775px;top:495.8px;width:12px;height:12.7px;border-left:1px solid #D0D0D0;border-top:1px solid #D0D0D0;border-bottom:1px solid #FAFAFA"></div>
<svg class="a" style="left:0;top:0" width="800" height="513" viewBox="0 0 800 513" font-family="Liberation Sans, sans-serif">
<text x="288" y="10.3" font-size="7.6" transform="translate(0 10.3) scale(1 1.1) translate(0 -10.3)" fill="#3E3A2C" stroke="#3E3A2C" stroke-width="0.06" textLength="223.5" lengthAdjust="spacingAndGlyphs">expecco: NewTestsuite.ets -- Logindaten eingeben und absenden</text>
<text x="6.1" y="24.0" font-size="6.6" transform="translate(0 24.0) scale(1 1.1) translate(0 -24.0)" fill="#111" stroke="#111" stroke-width="0.14" textLength="13.3" lengthAdjust="spacingAndGlyphs">Datei</text>
<text x="24.5" y="24.0" font-size="6.6" transform="translate(0 24.0) scale(1 1.1) translate(0 -24.0)" fill="#111" stroke="#111" stroke-width="0.14" textLength="19.3" lengthAdjust="spacingAndGlyphs">Fenster</text>
<text x="49" y="24.0" font-size="6.6" transform="translate(0 24.0) scale(1 1.1) translate(0 -24.0)" fill="#111" stroke="#111" stroke-width="0.14" textLength="21.9" lengthAdjust="spacingAndGlyphs">Gehe zu</text>
<text x="75.3" y="24.0" font-size="6.6" transform="translate(0 24.0) scale(1 1.1) translate(0 -24.0)" fill="#111" stroke="#111" stroke-width="0.14" textLength="35.4" lengthAdjust="spacingAndGlyphs">Projektbaum</text>
<text x="115.6" y="24.0" font-size="6.6" transform="translate(0 24.0) scale(1 1.1) translate(0 -24.0)" fill="#111" stroke="#111" stroke-width="0.14" textLength="28.4" lengthAdjust="spacingAndGlyphs">Diagramm</text>
<text x="148.9" y="24.0" font-size="6.6" transform="translate(0 24.0) scale(1 1.1) translate(0 -24.0)" fill="#111" stroke="#111" stroke-width="0.14" textLength="34.5" lengthAdjust="spacingAndGlyphs">Testresultate</text>
<text x="188.7" y="24.0" font-size="6.6" transform="translate(0 24.0) scale(1 1.1) translate(0 -24.0)" fill="#111" stroke="#111" stroke-width="0.14" textLength="15.2" lengthAdjust="spacingAndGlyphs">Extras</text>
<text x="208.8" y="24.0" font-size="6.6" transform="translate(0 24.0) scale(1 1.1) translate(0 -24.0)" fill="#111" stroke="#111" stroke-width="0.14" textLength="38.9" lengthAdjust="spacingAndGlyphs">Erweiterungen</text>
<text x="253.1" y="24.0" font-size="6.6" transform="translate(0 24.0) scale(1 1.1) translate(0 -24.0)" fill="#111" stroke="#111" stroke-width="0.14" textLength="13.2" lengthAdjust="spacingAndGlyphs">Hilfe</text>
<text x="16" y="53.9" font-size="6.8" transform="translate(0 53.9) scale(1 1.1) translate(0 -53.9)" fill="#222" stroke="#222" stroke-width="0.06" textLength="30" lengthAdjust="spacingAndGlyphs">Navigation</text>
<text x="66.9" y="54.4" font-size="6.8" transform="translate(0 54.4) scale(1 1.1) translate(0 -54.4)" fill="#222" stroke="#222" stroke-width="0.06" textLength="20.2" lengthAdjust="spacingAndGlyphs">Suchen</text>
<text x="108.1" y="54.4" font-size="6.8" transform="translate(0 54.4) scale(1 1.1) translate(0 -54.4)" fill="#222" stroke="#222" stroke-width="0.06" textLength="16.5" lengthAdjust="spacingAndGlyphs">Fehler</text>
<text x="145.6" y="54.4" font-size="6.8" transform="translate(0 54.4) scale(1 1.1) translate(0 -54.4)" fill="#222" stroke="#222" stroke-width="0.06" textLength="42" lengthAdjust="spacingAndGlyphs">Besonderheiten</text>
<text x="209.5" y="54.4" font-size="6.8" transform="translate(0 54.4) scale(1 1.1) translate(0 -54.4)" fill="#222" stroke="#222" stroke-width="0.06" textLength="16.7" lengthAdjust="spacingAndGlyphs">Typen</text>
<text x="264.75" y="54.8" font-size="6.8" transform="translate(0 54.8) scale(1 1.1) translate(0 -54.8)" fill="#222" stroke="#222" stroke-width="0.06" textLength="21.75" lengthAdjust="spacingAndGlyphs">Schema</text>
<text x="323.6" y="54.1" font-size="6.8" transform="translate(0 54.1) scale(1 1.1) translate(0 -54.1)" fill="#222" stroke="#222" stroke-width="0.06" textLength="25.9" lengthAdjust="spacingAndGlyphs">Netzwerk</text>
<text x="386.7" y="54.8" font-size="6.8" transform="translate(0 54.8) scale(1 1.1) translate(0 -54.8)" fill="#222" stroke="#222" stroke-width="0.06" textLength="56.3" lengthAdjust="spacingAndGlyphs">Variablenumgebung</text>
<text x="480" y="54.8" font-size="6.8" transform="translate(0 54.8) scale(1 1.1) translate(0 -54.8)" fill="#222" stroke="#222" stroke-width="0.06" textLength="38.4" lengthAdjust="spacingAndGlyphs">Betriebsmittel</text>
<text x="555.6" y="54.8" font-size="6.8" transform="translate(0 54.8) scale(1 1.1) translate(0 -54.8)" fill="#222" stroke="#222" stroke-width="0.06" textLength="21.4" lengthAdjust="spacingAndGlyphs">Historie</text>
<text x="614" y="54.8" font-size="6.8" transform="translate(0 54.8) scale(1 1.1) translate(0 -54.8)" fill="#222" stroke="#222" stroke-width="0.06" textLength="43" lengthAdjust="spacingAndGlyphs">Dokumentation</text>
<text x="695" y="54.8" font-size="6.8" transform="translate(0 54.8) scale(1 1.1) translate(0 -54.8)" fill="#222" stroke="#222" stroke-width="0.06" textLength="30" lengthAdjust="spacingAndGlyphs">Test/Demo</text>
<text x="762" y="54.8" font-size="6.8" transform="translate(0 54.8) scale(1 1.1) translate(0 -54.8)" fill="#222" stroke="#222" stroke-width="0.06" textLength="12.4" lengthAdjust="spacingAndGlyphs">Lauf</text>
<text x="17.5" y="84.2" font-size="6.7" font-weight="bold" transform="translate(0 84.2) scale(1 1.1) translate(0 -84.2)" fill="#111" stroke="#111" stroke-width="0.12" textLength="40" lengthAdjust="spacingAndGlyphs">NewTestsuite</text>
<text x="26" y="94.0" font-size="6.7" transform="translate(0 94.0) scale(1 1.1) translate(0 -94.0)" fill="#222" stroke="#222" stroke-width="0.12" textLength="21" lengthAdjust="spacingAndGlyphs">Imports</text>
<text x="26" y="103.9" font-size="6.7" font-weight="bold" transform="translate(0 103.9) scale(1 1.1) translate(0 -103.9)" fill="#111" stroke="#111" stroke-width="0.12" textLength="16.5" lengthAdjust="spacingAndGlyphs">Login</text>
<text x="34" y="113.6" font-size="6.7" transform="translate(0 113.6) scale(1 1.1) translate(0 -113.6)" fill="#FFF" stroke="#FFF" stroke-width="0.06" textLength="102.5" lengthAdjust="spacingAndGlyphs">Logindaten eingeben und absenden</text>
<text x="26" y="123.5" font-size="6.7" font-weight="bold" transform="translate(0 123.5) scale(1 1.1) translate(0 -123.5)" fill="#111" stroke="#111" stroke-width="0.12" textLength="48.75" lengthAdjust="spacingAndGlyphs">Start Connection</text>
<text x="26" y="133.5" font-size="6.7" transform="translate(0 133.5) scale(1 1.1) translate(0 -133.5)" fill="#222" stroke="#222" stroke-width="0.12" textLength="44.4" lengthAdjust="spacingAndGlyphs">SessionBeenden</text>
<text x="468" y="488.8" font-size="6.6" transform="translate(0 488.8) scale(1 1.1) translate(0 -488.8)" fill="#9A9A9A" stroke="#9A9A9A" stroke-width="0.06" textLength="35.6" lengthAdjust="spacingAndGlyphs">Übernehmen</text>
<text x="539" y="488.8" font-size="6.6" transform="translate(0 488.8) scale(1 1.1) translate(0 -488.8)" fill="#9A9A9A" stroke="#9A9A9A" stroke-width="0.06" textLength="28" lengthAdjust="spacingAndGlyphs">Verwerfen</text>
<text x="7" y="504.8" font-size="6.5" transform="translate(0 504.8) scale(1 1.1) translate(0 -504.8)" fill="#111" stroke="#111" stroke-width="0.12" textLength="222" lengthAdjust="spacingAndGlyphs">Letzte Aktion: Änderungen in &quot;Logindaten eingeben und absenden&quot; übernehmen</text>
<text x="393.5" y="504.8" font-size="6.5" transform="translate(0 504.8) scale(1 1.1) translate(0 -504.8)" fill="#111" stroke="#111" stroke-width="0.12" textLength="11.5" lengthAdjust="spacingAndGlyphs">Lint:</text>
<text x="407" y="504.8" font-size="6.5" transform="translate(0 504.8) scale(1 1.1) translate(0 -504.8)" fill="#F02838" stroke="#F02838" stroke-width="0.12" textLength="332" lengthAdjust="spacingAndGlyphs">In Test: Nicht ausgeführter Schritt &quot;Send Keys&quot; in &quot;Logindaten eingeben und absenden&quot; (Pin &quot;benutername&quot; ohne Datum)</text>
<rect x="6.3" y="24.9" width="4.2" height="0.6" fill="#1A1A1A"/>
<rect x="29.2" y="24.9" width="3.2" height="0.6" fill="#1A1A1A"/>
<rect x="149.1" y="24.9" width="3.6" height="0.6" fill="#1A1A1A"/>
<rect x="253.3" y="24.9" width="4.2" height="0.6" fill="#1A1A1A"/>
</svg>
</body></html>
